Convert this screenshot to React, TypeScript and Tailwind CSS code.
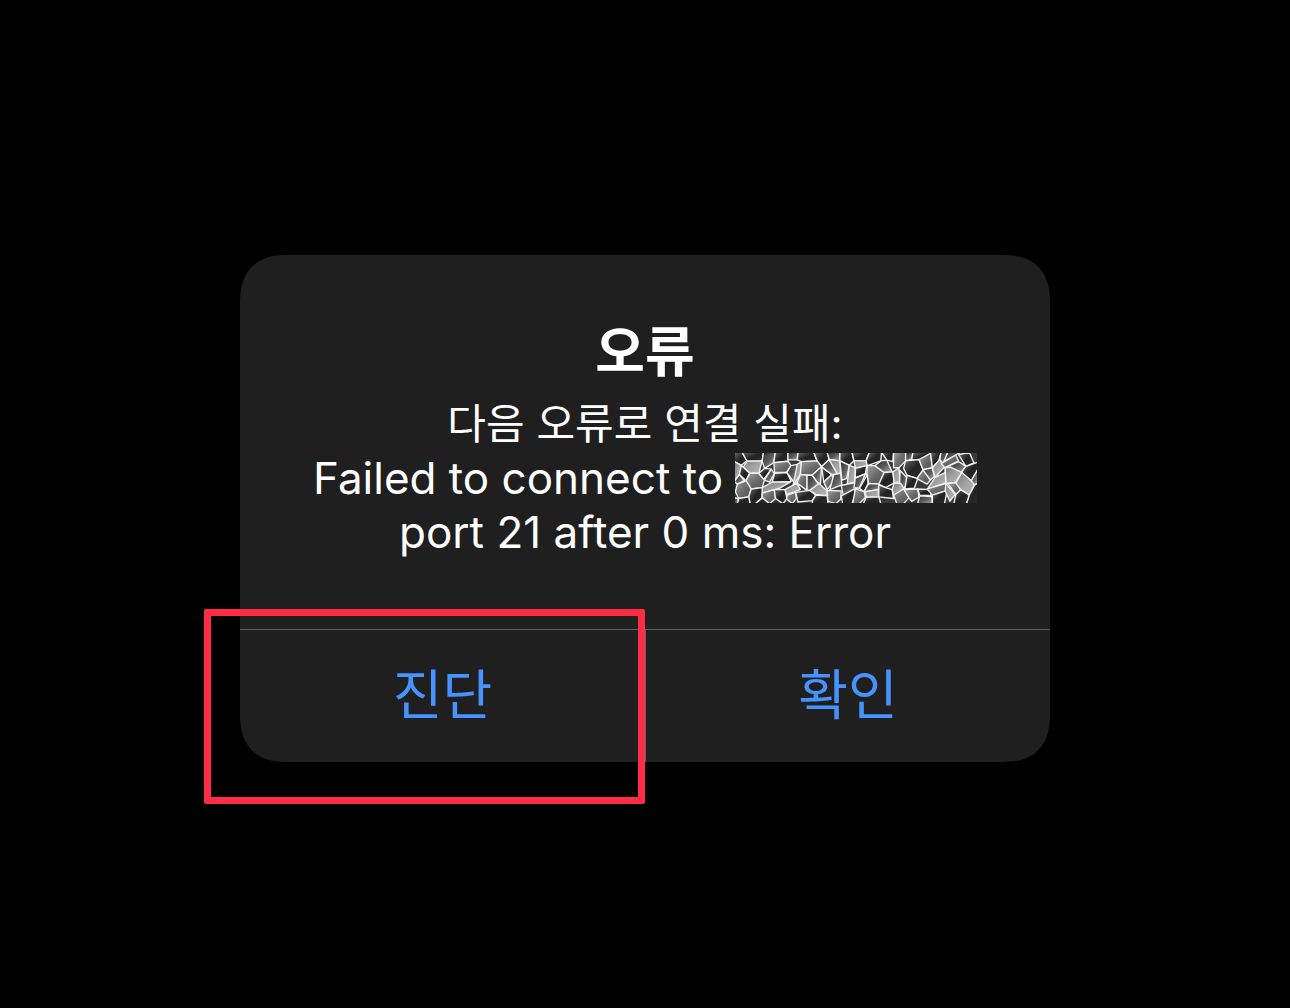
import React from 'react';

type Shade = 'dark' | 'mid' | 'light' | 'steel';

interface Cell {
  points: string;
  shade: Shade;
}

// Cells of the crystallized mask that hides the host name
const maskCells: Cell[] = [
  { points: '15,15 38,15 53,39 36,53 15,42', shade: 'dark' },
  { points: '38,15 102,15 98,40 53,41', shade: 'dark' },
  { points: '53,41 98,40 88,76 62,76 42,58', shade: 'light' },
  { points: '102,15 137,15 133,45 105,62 98,40', shade: 'mid' },
  { points: '137,15 175,15 175,41 133,45', shade: 'dark' },
  { points: '175,15 205,15 203,37 175,37', shade: 'mid' },
  { points: '205,15 252,15 262,40 215,42 203,37', shade: 'dark' },
  { points: '252,15 292,15 298,36 275,57 262,40', shade: 'dark' },
  { points: '292,15 330,15 330,40 298,36', shade: 'mid' },
  { points: '330,15 366,15 372,40 358,53 330,40', shade: 'dark' },
  { points: '15,42 36,53 30,80 15,100', shade: 'light' },
  { points: '36,53 60,76 50,98 30,80', shade: 'dark' },
  { points: '15,100 30,80 45,98 24,108', shade: 'mid' },
  { points: '62,76 88,76 105,96 98,118 65,122 50,98', shade: 'steel' },
  { points: '24,108 50,98 65,122 58,145 28,150 18,130', shade: 'steel' },
  { points: '88,76 105,62 125,64 103,94', shade: 'dark' },
  { points: '105,96 125,64 135,78 120,102', shade: 'mid' },
  { points: '133,45 175,41 184,54 170,74 135,74', shade: 'steel' },
  { points: '135,76 172,74 185,100 128,102', shade: 'dark' },
  { points: '184,54 203,50 198,110 172,74', shade: 'mid' },
  { points: '203,50 215,42 212,80 190,112', shade: 'light' },
  { points: '215,42 262,40 275,57 247,82 212,80', shade: 'steel' },
  { points: '247,82 275,57 272,108 262,102', shade: 'mid' },
  { points: '275,57 306,80 282,102', shade: 'dark' },
  { points: '275,57 298,36 325,78 306,80', shade: 'mid' },
  { points: '298,36 330,40 332,76 322,78', shade: 'light' },
  { points: '330,40 358,53 350,92 336,96', shade: 'mid' },
  { points: '358,53 376,60 374,102 352,108', shade: 'light' },
  { points: '212,80 232,82 232,126 202,105', shade: 'steel' },
  { points: '232,82 247,82 266,108 245,126 232,126', shade: 'mid' },
  { points: '282,102 306,80 312,100 292,124', shade: 'steel' },
  { points: '312,80 332,76 336,110 300,124', shade: 'mid' },
  { points: '98,118 128,102 182,102 150,120 98,134', shade: 'light' },
  { points: '65,122 98,118 98,148 78,165 62,165 58,145', shade: 'dark' },
  { points: '98,134 134,124 138,150 120,165 98,148', shade: 'steel' },
  { points: '134,124 166,124 172,150 160,165 138,150', shade: 'dark' },
  { points: '166,124 202,105 212,124 172,138', shade: 'light' },
  { points: '172,140 198,132 200,150 188,165 172,152', shade: 'steel' },
  { points: '198,132 240,126 258,140 248,156 205,160', shade: 'dark' },
  { points: '240,126 268,106 292,128 292,142 258,138', shade: 'light' },
  { points: '292,126 334,128 332,152 318,165 294,158', shade: 'steel' },
  { points: '334,112 372,104 380,120 340,140', shade: 'mid' },
  { points: '334,142 374,122 376,140 366,165 338,165', shade: 'dark' },
  { points: '15,148 28,150 24,165 15,165', shade: 'mid' },
  { points: '28,150 58,145 62,165 24,165', shade: 'dark' },
  { points: '248,156 258,140 292,142 294,165 248,165', shade: 'dark' },
  { points: '98,148 120,165 78,165', shade: 'dark' },
  { points: '366,15 418,15 408,40 372,40', shade: 'dark' },
  { points: '372,40 408,40 412,54 376,62', shade: 'light' },
  { points: '376,62 410,54 406,78 376,90', shade: 'dark' },
  { points: '418,15 454,15 452,40 412,54 408,40', shade: 'dark' },
  { points: '412,54 434,54 462,74 448,108 416,106 410,80', shade: 'steel' },
  { points: '452,40 470,38 486,72 462,74 434,54', shade: 'mid' },
  { points: '454,15 490,15 488,42 470,38', shade: 'dark' },
  { points: '490,15 526,15 526,40 506,60 490,60', shade: 'steel' },
  { points: '526,15 548,15 544,36 526,40', shade: 'mid' },
  { points: '548,15 600,15 596,22 566,42 544,36', shade: 'dark' },
  { points: '526,40 566,36 578,66 560,92 530,82 520,62', shade: 'dark' },
  { points: '566,36 600,18 606,60 578,66', shade: 'steel' },
  { points: '600,15 632,15 624,42 606,60', shade: 'dark' },
  { points: '462,74 488,72 492,104 466,118 446,108', shade: 'dark' },
  { points: '488,72 506,60 510,100 492,104', shade: 'light' },
  { points: '510,68 540,100 520,120 508,104', shade: 'mid' },
  { points: '530,82 562,92 552,120 524,122', shade: 'dark' },
  { points: '560,92 578,66 600,96 590,108', shade: 'steel' },
  { points: '578,66 606,60 612,86 600,96', shade: 'mid' },
  { points: '606,60 628,36 642,58 614,88', shade: 'light' },
  { points: '628,36 632,15 652,15 640,50', shade: 'mid' },
  { points: '632,48 675,22 684,40 644,60', shade: 'steel' },
  { points: '652,15 690,15 640,42', shade: 'mid' },
  { points: '644,60 684,42 706,56 692,74 644,76', shade: 'mid' },
  { points: '684,22 716,15 730,46 706,56', shade: 'dark' },
  { points: '706,56 741,44 741,66 722,98 692,74', shade: 'dark' },
  { points: '644,60 660,58 694,74 674,104 646,106', shade: 'light' },
  { points: '614,88 644,74 646,104 590,124', shade: 'light' },
  { points: '376,90 406,78 388,120 372,118', shade: 'mid' },
  { points: '388,120 412,80 414,106 402,130', shade: 'dark' },
  { points: '402,130 416,106 448,108 444,124 406,130', shade: 'mid' },
  { points: '376,122 402,130 406,146 388,165 368,165', shade: 'steel' },
  { points: '406,130 444,124 446,145 408,146', shade: 'light' },
  { points: '446,110 466,118 486,124 490,150 446,145', shade: 'dark' },
  { points: '486,124 492,104 512,106 522,124 490,142', shade: 'light' },
  { points: '490,140 520,122 536,148 520,165 500,165', shade: 'steel' },
  { points: '522,124 562,122 566,146 544,158 536,148', shade: 'steel' },
  { points: '562,122 602,124 602,142 568,140', shade: 'dark' },
  { points: '568,142 604,144 606,165 562,165', shade: 'mid' },
  { points: '590,122 646,106 650,126 606,140', shade: 'steel' },
  { points: '606,140 650,126 642,165 606,165', shade: 'dark' },
  { points: '646,106 674,138 658,158 644,128', shade: 'light' },
  { points: '652,106 676,104 690,124 676,138', shade: 'steel' },
  { points: '676,104 694,74 722,98 732,110 716,140 690,124', shade: 'light' },
  { points: '722,98 741,66 741,106 732,110', shade: 'mid' },
  { points: '690,124 716,140 708,165 670,165 676,138', shade: 'dark' },
  { points: '716,140 732,110 741,106 741,165 708,165', shade: 'dark' },
  { points: '408,146 446,145 452,165 400,165', shade: 'dark' },
];

const fills: Record<Shade, string> = {
  dark: 'url(#cell-dark)',
  mid: 'url(#cell-mid)',
  light: 'url(#cell-light)',
  steel: 'url(#cell-steel)',
};

const gradients: [string, string, string, string][] = [
  ['cell-dark', '#6b6b6b', '#222222', '#2c2c2c'],
  ['cell-mid', '#303030', '#5a5a5a', '#a8a8a8'],
  ['cell-light', '#7c7c7c', '#a2a2a2', '#b8b8b8'],
  ['cell-steel', '#a0a0a0', '#6c6c6c', '#505050'],
];

const HostMask: React.FC = () => (
  <svg
    className="h-[50px] w-[242px] shrink-0"
    viewBox="17 17 722 146"
    preserveAspectRatio="none"
    aria-hidden="true"
  >
    <defs>
      {gradients.map(([id, from, middle, to]) => (
        <linearGradient key={id} id={id} x1="0" y1="0" x2="1" y2="1">
          <stop offset="0" stopColor={from} />
          <stop offset="0.5" stopColor={middle} />
          <stop offset="1" stopColor={to} />
        </linearGradient>
      ))}
    </defs>
    <rect x="15" y="15" width="726" height="150" fill="#383838" />
    {maskCells.map((cell) => (
      <polygon
        key={cell.points}
        points={cell.points}
        fill={fills[cell.shade]}
        stroke="#f2f2f2"
        strokeWidth="4"
        strokeLinejoin="round"
      />
    ))}
  </svg>
);

interface AlertButtonProps {
  label: string;
  className?: string;
}

const AlertButton: React.FC<AlertButtonProps> = ({ label, className = '' }) => (
  <button
    type="button"
    className={`h-[132px] w-full text-[54px] leading-[128px] text-[#4593ff] ${className}`}
  >
    {label}
  </button>
);

export default function App() {
  return (
    <main className="flex min-h-screen items-center justify-center bg-black px-4 pt-[9px] font-['Inter','Noto_Sans_CJK_KR',sans-serif]">
      <div
        role="alertdialog"
        aria-labelledby="alert-title"
        aria-describedby="alert-message"
        className="w-full max-w-[810px] rounded-[48px] bg-[#1f1f1f] text-white [corner-shape:superellipse(1.3)]"
      >
        {/* Message */}
        <div className="px-16 pt-[60px] pb-[70px] text-center">
          <h1 id="alert-title" className="mb-1.5 text-[54px] leading-[76px] font-bold">
            오류
          </h1>
          <div id="alert-message" className="text-[44px] leading-[54px]">
            <p className="text-[42px]">다음 오류로 연결 실패:</p>
            <p className="flex h-[54px] items-center justify-center gap-3 whitespace-nowrap">
              Failed to connect to <HostMask />
            </p>
            <p>port 21 after 0 ms: Error</p>
          </div>
        </div>

        {/* Actions */}
        <div className="grid grid-cols-2 border-t border-[#626262]">
          <div className="relative">
            <AlertButton label="진단" />
            {/* Highlight */}
            <div className="pointer-events-none absolute -top-[21px] right-0 -bottom-[42px] -left-9 rounded-xs border-[7px] border-[#ff2d43]" />
          </div>
          <AlertButton label="확인" className="border-l border-[#626262]" />
        </div>
      </div>
    </main>
  );
}
